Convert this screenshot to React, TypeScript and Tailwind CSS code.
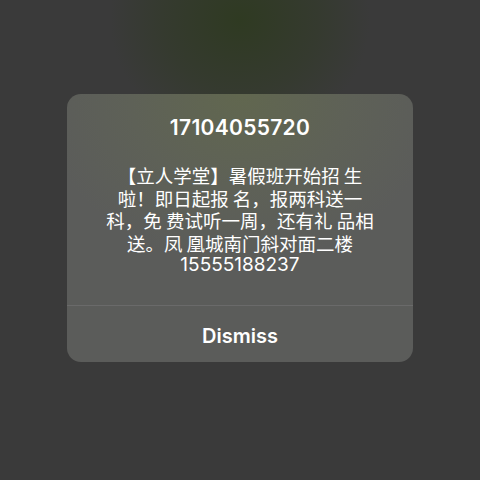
import React from 'react';

const lines = [
  '【立人学堂】暑假班开始招 生',
  '啦！即日起报 名，报两科送一',
  '科，免 费试听一周，还有礼 品相',
  '送。凤 凰城南门斜对面二楼',
  '15555188237',
];

const App: React.FC = () => {
  return (
    <div className="w-[480px] h-[480px] bg-[#3a3a3a] bg-[radial-gradient(ellipse_130px_120px_at_240px_20px,#2f3a22_0%,#353a2f_60%,#3a3a3a_100%)] flex flex-col items-center pt-[94px] font-['Inter','Noto_Sans_CJK_SC',sans-serif] text-white">
      <div className="w-[346px] h-[268px] rounded-[14px] bg-[#5b5c5a] bg-[radial-gradient(ellipse_200px_170px_at_173px_0px,#61674f_0%,#5e6157_55%,#5b5c5a_100%)] flex flex-col overflow-hidden">
        <div className="flex flex-col items-center pt-[21px] flex-1">
          <div className="text-[21px] leading-[26px] font-semibold tracking-[0.3px]">17104055720</div>
          <div className="mt-[23px] flex flex-col items-center text-[18.5px] leading-[22.5px] font-['Noto_Sans_CJK_SC',sans-serif]">
            {lines.map((l, i) => (
              <div key={i} className={i === 4 ? "font-['Inter',sans-serif] text-[19px] leading-[22.5px]" : 'leading-[22.5px]'}>{l}</div>
            ))}
          </div>
        </div>
        <div className="h-px bg-[#6a6a6a]" />
        <div className="h-[56px] flex items-center justify-center text-[20px] font-semibold pt-[4px]">Dismiss</div>
      </div>
    </div>
  );
};

export default App;
